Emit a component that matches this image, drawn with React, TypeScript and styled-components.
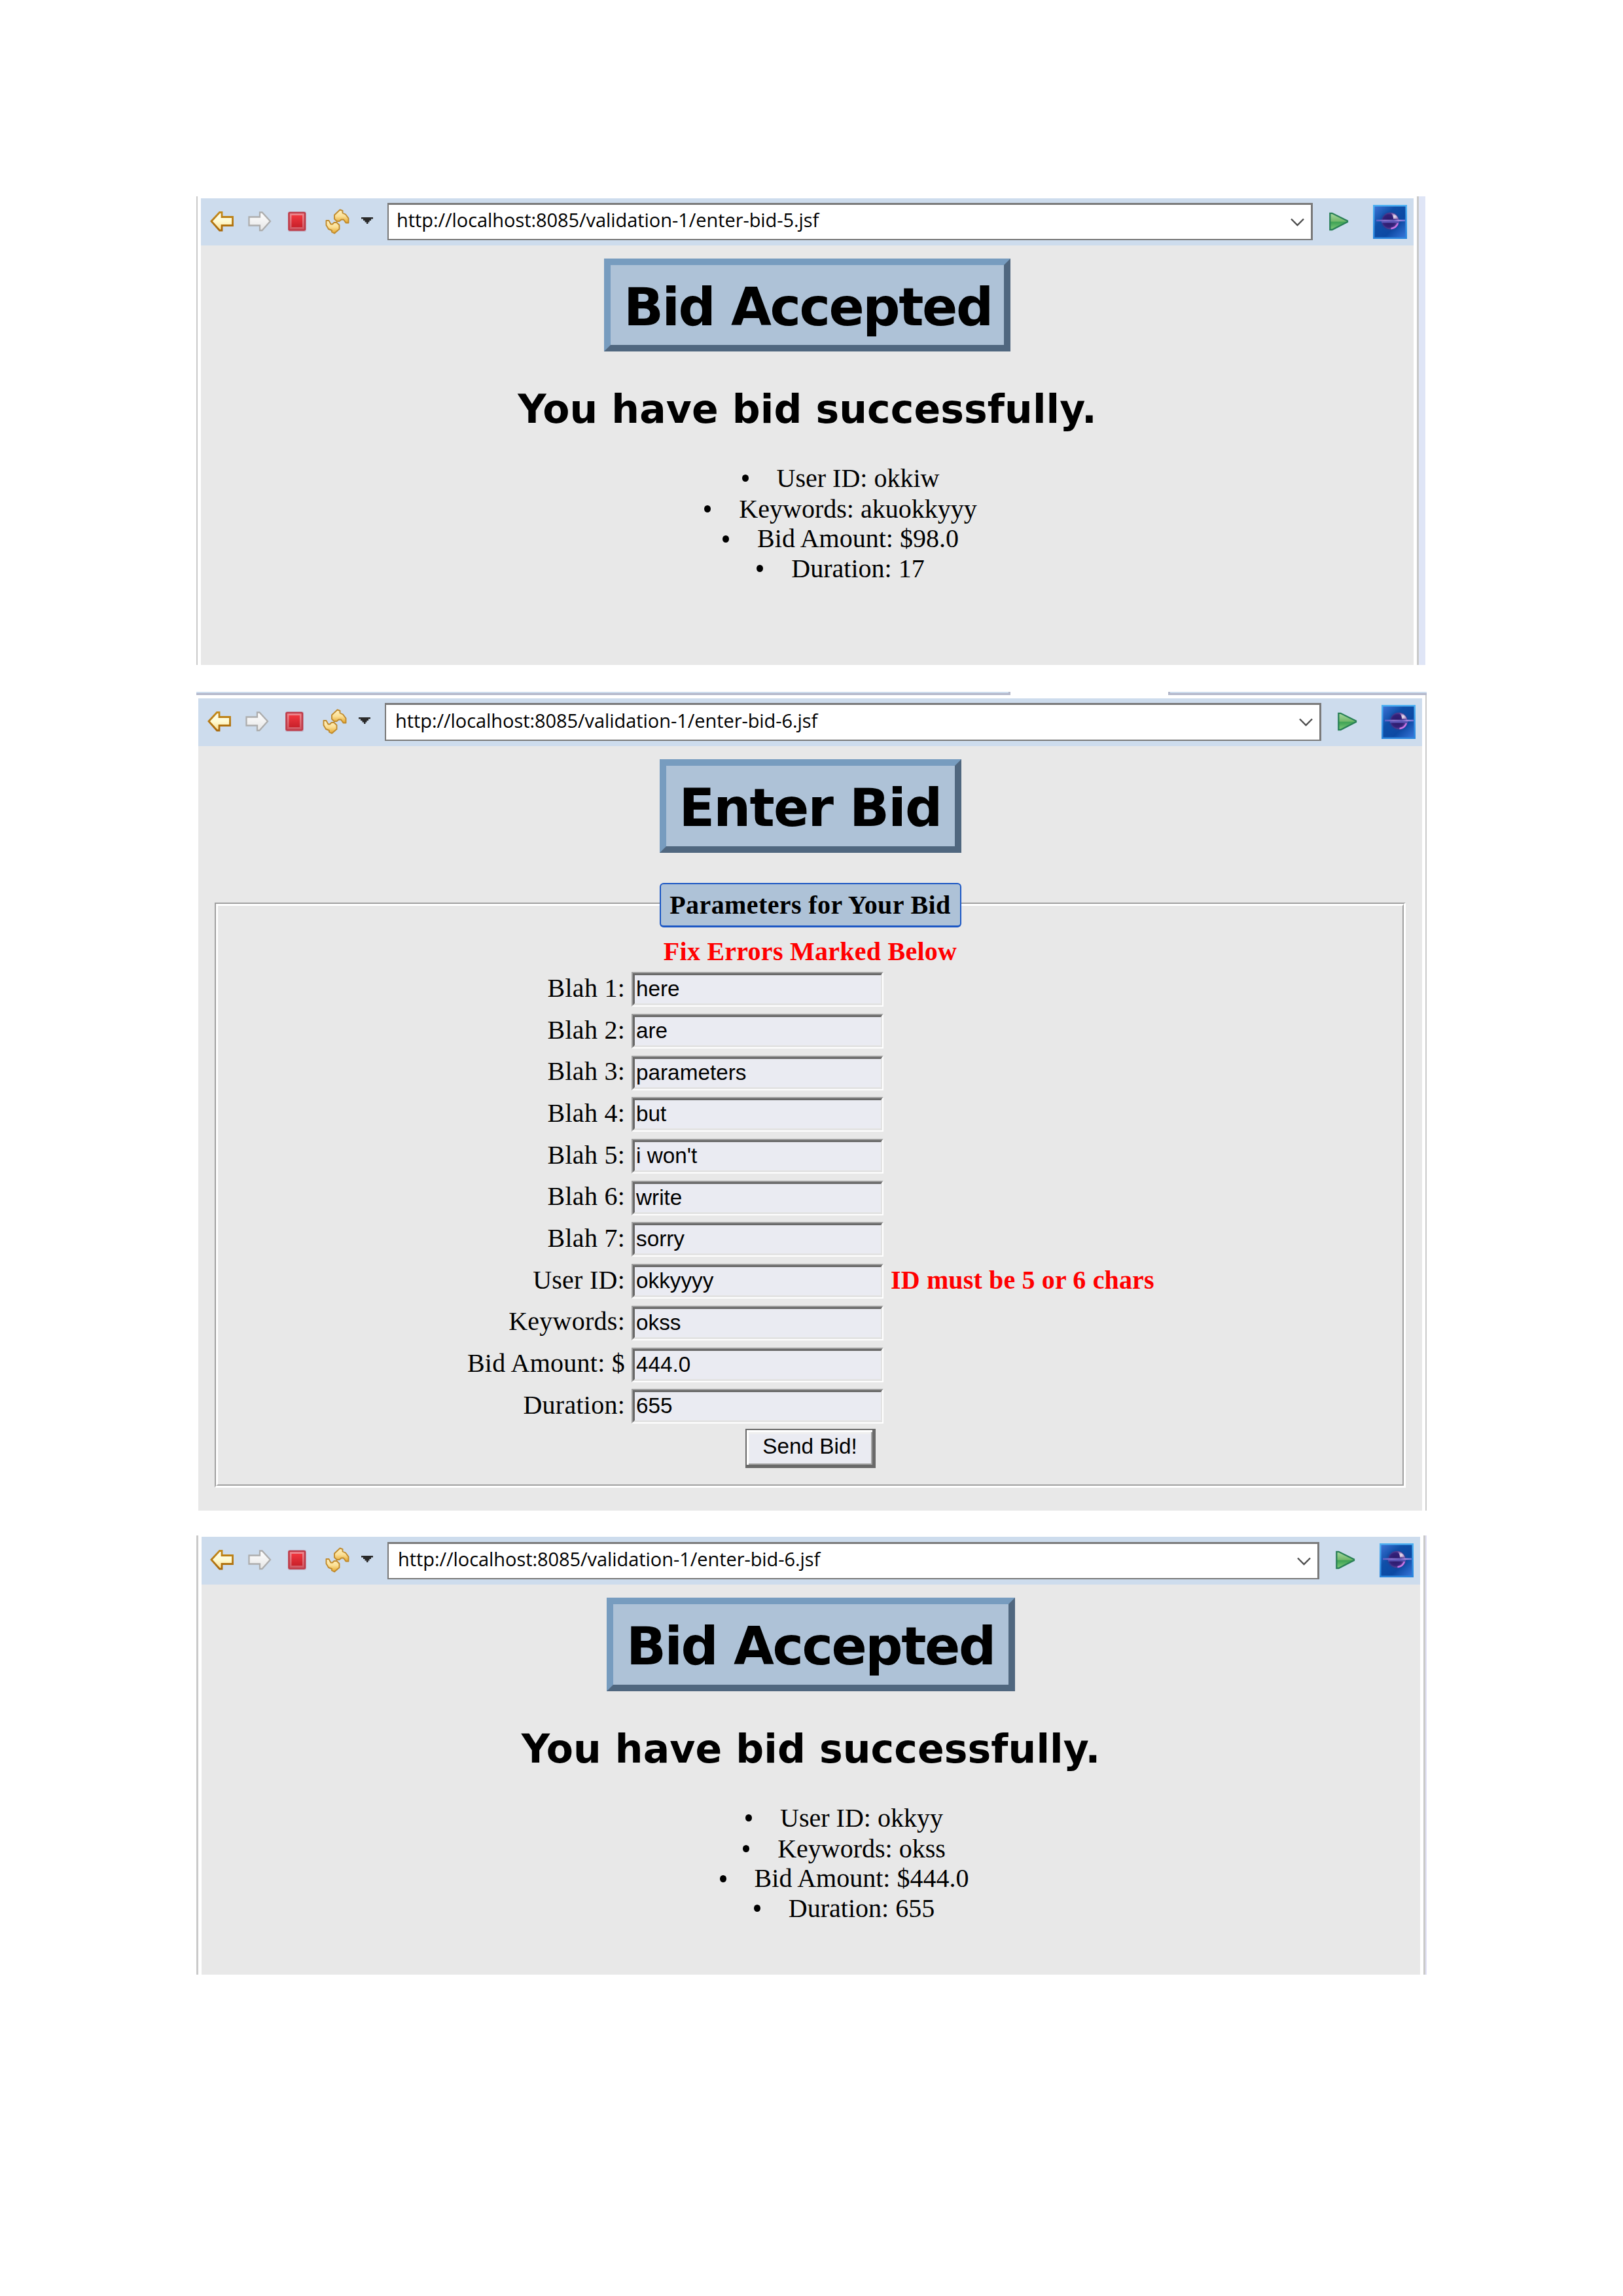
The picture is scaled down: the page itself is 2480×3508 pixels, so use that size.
import React from "react";
import styled, { createGlobalStyle } from "styled-components";

const GlobalStyle = createGlobalStyle`
  *, *::before, *::after { box-sizing: border-box; }
  html, body { margin: 0; padding: 0; background: #ffffff; }
`;

const SERIF = `"Liberation Serif", "Times New Roman", serif`;
const SANS = `"Liberation Sans", Arial, sans-serif`;
const HEADING = `"DejaVu Sans", Verdana, sans-serif`;
const CHROME = `"Open Sans", "Noto Sans", sans-serif`;

/* ---------- page and window frames ---------- */

const Page = styled.main`
  width: 2480px;
  height: 3508px;
  padding: 300px 0 0 300px;
  background: #ffffff;
  color: #000000;
  font-family: ${SERIF};
  font-size: 40px;
  overflow: hidden;
`;

const Frame = styled.section<{ $width: number; $height: number; $gap: number }>`
  display: flex;
  width: ${(p) => p.$width}px;
  height: ${(p) => p.$height}px;
  margin-bottom: ${(p) => p.$gap}px;
`;

const Edge = styled.div<{ $width: number; $color?: string }>`
  flex: none;
  width: ${(p) => p.$width}px;
  background: ${(p) => p.$color ?? "#cacaca"};
`;

const View = styled.div<{ $top: number; $left: number; $right: number }>`
  flex: 1;
  min-width: 0;
  display: flex;
  flex-direction: column;
  margin: ${(p) => p.$top}px ${(p) => p.$right}px 0 ${(p) => p.$left}px;
  background: #e8e8e8;
`;

const TabStrip = styled.div`
  display: flex;
  justify-content: space-between;
  width: 1880px;
  height: 5px;
`;

const TabEdge = styled.div<{ $width: number; $side: "left" | "right" }>`
  width: ${(p) => p.$width}px;
  background: #cddced;
  border-bottom: 3px solid #b3b8cb;
  border-${(p) => p.$side}: 3px solid #b3b8cb;
`;

/* ---------- browser toolbar ---------- */

const Bar = styled.div<{ $height: number; $left: number; $right: number }>`
  flex: none;
  display: flex;
  align-items: flex-start;
  height: ${(p) => p.$height}px;
  padding: 0 ${(p) => p.$right}px 0 ${(p) => p.$left}px;
  background: #cddced;
`;

const Icon = styled.svg<{ $top: number; $after?: number }>`
  flex: none;
  display: block;
  margin-top: ${(p) => p.$top}px;
  margin-right: ${(p) => p.$after ?? 0}px;
`;

const Address = styled.div<{ $top: number; $height: number; $inset: number }>`
  flex: 1;
  display: flex;
  align-items: center;
  justify-content: space-between;
  height: ${(p) => p.$height}px;
  margin: ${(p) => p.$top}px 25px 0 0;
  padding: 0 10px 0 ${(p) => p.$inset}px;
  border: solid #7a7a7a;
  border-width: 3px 3px 2px 2px;
  background: #ffffff;
`;

const Url = styled.span`
  padding-bottom: 6px;
  font-family: ${CHROME};
  font-size: 29px;
  line-height: 40px;
  letter-spacing: -0.070px;
  white-space: nowrap;
`;

type ToolbarProps = {
  url: string;
  height: number;
  left: number;
  right: number;
  addressTop: number;
  addressHeight: number;
  inset: number;
  id: string;
};

function Toolbar({ url, height, left, right, addressTop, addressHeight, inset, id }: ToolbarProps) {
  return (
    <Bar $height={height} $left={left} $right={right}>
      <Icon $top={19} $after={22} width="36" height="32" viewBox="0 0 36 32">
        <defs>
          <linearGradient id={`${id}-gold`} x1="0" y1="0" x2="0" y2="1">
            <stop offset="0" stopColor="#fffdf0" />
            <stop offset=".5" stopColor="#fffbd2" />
            <stop offset="1" stopColor="#fbdc8a" />
          </linearGradient>
          <linearGradient id={`${id}-rim`} x1="0" y1="0" x2="0" y2="1">
            <stop offset="0" stopColor="#c48a1a" />
            <stop offset="1" stopColor="#a9690a" />
          </linearGradient>
        </defs>
        <path d="M2 16 L14.5 2.5 H18 V9.5 H34.5 V22.5 H18 V30 H14.5 Z" fill={`url(#${id}-gold)`} stroke={`url(#${id}-rim)`} strokeWidth="2.8" />
      </Icon>
      <Icon $top={19} $after={25} width="36" height="32" viewBox="0 0 36 32">
        <defs>
          <linearGradient id={`${id}-grey`} x1="0" y1="0" x2="0" y2="1">
            <stop offset="0" stopColor="#ffffff" />
            <stop offset="1" stopColor="#e6e6e6" />
          </linearGradient>
        </defs>
        <path d="M34 16 L21.500 2.500 H18 V9.500 H1.500 V22.500 H18 V30 H21.500 Z" fill={`url(#${id}-grey)`} stroke="#adadad" strokeWidth="2.3" />
      </Icon>
      <Icon $top={20} $after={29} width="28" height="32" viewBox="0 0 28 32">
        <defs>
          <linearGradient id={`${id}-stop`} x1="0" y1="0" x2="0" y2="1">
            <stop offset="0" stopColor="#f0363e" />
            <stop offset="1" stopColor="#c9202a" />
          </linearGradient>
          <linearGradient id={`${id}-bevel`} x1="0" y1="0" x2="0" y2="1">
            <stop offset="0" stopColor="#f08c92" />
            <stop offset="1" stopColor="#cf5560" />
          </linearGradient>
        </defs>
        <rect x="0" y="0" width="28" height="31" rx="2" fill="#b9a9bd" opacity=".6" />
        <rect x="1.500" y="2" width="24.500" height="26.500" rx="1.500" fill={`url(#${id}-bevel)`} stroke="#bf3a47" strokeWidth="2.600" />
        <rect x="5.500" y="6" width="16.500" height="18" fill={`url(#${id}-stop)`} />
      </Icon>
      <Icon $top={15} $after={18} width="37" height="40" viewBox="0 0 37 40">
        <defs>
          <linearGradient id={`${id}-amber`} x1="0" y1="0" x2="0" y2="1">
            <stop offset="0" stopColor="#fff2c4" />
            <stop offset=".5" stopColor="#fbdf94" />
            <stop offset="1" stopColor="#e3a42a" />
          </linearGradient>
        </defs>
        <g fill={`url(#${id}-amber)`} stroke="#c08a2c" strokeWidth="1.900" strokeLinejoin="round">
          <path d="M22.500 2.500 L14 10.500 V16.500 L17.500 20 H21.500 L24.500 17.500 H28 L31.500 22.500 H35.500 V15.500 L31 9.500 L26.500 7.500 V4 Z" />
          <path d="M14 38.500 L21.500 32 V26 L17.500 22 H13.500 L11 24.500 H8.500 L5.500 19 H1.500 V26 L5 32 L10 34 V36.500 Z" />
        </g>
      </Icon>
      <Icon $top={29} $after={22} width="18" height="10" viewBox="0 0 18 10">
        <path d="M0 0 H18 V2.500 H15 V5 H12.500 V7.500 H10.500 V10 H8 V7.500 H5.500 V5 H3 V2.500 H0 Z" fill="#292929" />
      </Icon>
      <Address $top={addressTop} $height={addressHeight} $inset={inset}>
        <Url>{url}</Url>
        <Icon $top={1} width="21" height="14" viewBox="0 0 21 14">
          <path d="M1 1.500 L10.500 11 L20 1.500" fill="none" stroke="#4c4c4c" strokeWidth="2.300" />
        </Icon>
      </Address>
      <Icon $top={21} $after={37} width="30" height="30" viewBox="0 0 30 30">
        <defs>
          <linearGradient id={`${id}-go`} x1="0" y1="0" x2="0" y2="1">
            <stop offset="0" stopColor="#a9d8a0" />
            <stop offset=".48" stopColor="#74b96c" />
            <stop offset=".55" stopColor="#3fa356" />
            <stop offset="1" stopColor="#7fca78" />
          </linearGradient>
        </defs>
        <path d="M1.300 1.800 H4.500 L28 13.500 V15 L4.500 27 H1.300 Z" fill={`url(#${id}-go)`} stroke="#2a8057" strokeWidth="2.300" />
      </Icon>
      <Icon $top={10} width="52" height="52" viewBox="0 0 52 52">
        <defs>
          <linearGradient id={`${id}-sky`} x1="0" y1="0" x2="1" y2="1">
            <stop offset="0" stopColor="#3f74d6" />
            <stop offset=".35" stopColor="#0f4fa8" />
            <stop offset=".65" stopColor="#0c49a3" />
            <stop offset="1" stopColor="#3a78dc" />
          </linearGradient>
          <radialGradient id={`${id}-planet`} cx=".42" cy=".5" r=".6">
            <stop offset="0" stopColor="#2a1a66" />
            <stop offset=".6" stopColor="#33217a" />
            <stop offset=".85" stopColor="#5f4699" />
            <stop offset="1" stopColor="#8a66b8" />
          </radialGradient>
          <radialGradient id={`${id}-halo`} cx=".5" cy=".5" r=".5">
            <stop offset=".7" stopColor="#283a8e" stopOpacity=".75" />
            <stop offset="1" stopColor="#0f4fa8" stopOpacity="0" />
          </radialGradient>
          <radialGradient id={`${id}-shine`} cx=".5" cy=".6" r=".6">
            <stop offset="0" stopColor="#ece8f0" />
            <stop offset=".5" stopColor="#c0a9d2" />
            <stop offset="1" stopColor="#8a62b0" />
          </radialGradient>
          <linearGradient id={`${id}-frame`} x1="0" y1="0" x2="0" y2="1">
            <stop offset="0" stopColor="#4db0f2" />
            <stop offset="1" stopColor="#2a86de" />
          </linearGradient>
          <linearGradient id={`${id}-ring`} x1="0" y1="0" x2="1" y2="0">
            <stop offset="0" stopColor="#5b5fc4" />
            <stop offset=".3" stopColor="#8a74cc" />
            <stop offset=".6" stopColor="#6a62c0" />
            <stop offset=".78" stopColor="#a88be0" />
            <stop offset="1" stopColor="#6f74d8" />
          </linearGradient>
        </defs>
        <rect x="1.250" y="1.250" width="49.500" height="49.500" fill={`url(#${id}-sky)`} stroke={`url(#${id}-frame)`} strokeWidth="2.500" />
        <ellipse cx="26.500" cy="25" rx="18" ry="16.500" fill={`url(#${id}-halo)`} />
        <ellipse cx="26.500" cy="24.500" rx="12.800" ry="12.800" fill={`url(#${id}-planet)`} />
        <path d="M27.500 12.500 C33.500 13.500 37.500 17 38.500 21.500 H31 C31 18 30 15 27.500 12.500 Z" fill={`url(#${id}-shine)`} />
        <path d="M38 28 C36.500 32.500 33 35.500 27.500 36.300" fill="none" stroke="#c873e4" strokeWidth="2.400" />
        <rect x="5" y="22.700" width="44" height="2.500" fill={`url(#${id}-ring)`} />
        <rect x="13" y="25" width="27" height="2.500" fill="#5a53b4" />
      </Icon>
    </Bar>
  );
}

/* ---------- page contents ---------- */

const Title = styled.h1<{ $width: number; $height: number; $spacing: number; $indent: number }>`
  flex: none;
  align-self: center;
  width: ${(p) => p.$width}px;
  height: ${(p) => p.$height}px;
  margin: 20px 0 0;
  padding: 18px 0 0 ${(p) => p.$indent}px;
  border: 10px solid;
  border-color: #779cbf #50677f #50677f #779cbf;
  background: #aec2d7;
  font-family: ${HEADING};
  font-size: 80px;
  font-weight: bold;
  line-height: 93px;
  letter-spacing: ${(p) => p.$spacing}px;
  white-space: nowrap;
`;

const Message = styled.h2`
  flex: none;
  align-self: center;
  margin: 53px 0 48px;
  font-family: ${HEADING};
  font-size: 60px;
  font-weight: bold;
  line-height: 70px;
  letter-spacing: 0.100px;
  white-space: nowrap;
`;

const Facts = styled.ul`
  display: flex;
  flex-direction: column;
  margin: 0;
  padding: 0 0 0 102px;
  list-style: none;
`;

const Fact = styled.li`
  display: flex;
  align-items: center;
  justify-content: center;
  height: 45.700px;
  line-height: 45.700px;
  white-space: nowrap;

  &:first-child {
    margin-bottom: 1px;
  }

  &::before {
    content: "";
    width: 10px;
    height: 11px;
    margin: 0 43px 0 0;
    border-radius: 50%;
    background: #000000;
  }
`;

function Accepted({ facts, titleHeight, titleWidth }: { facts: string[]; titleHeight: number; titleWidth: number }) {
  return (
    <>
      <Title $width={titleWidth} $height={titleHeight} $spacing={-2.4} $indent={20}>
        Bid Accepted
      </Title>
      <Message>You have bid successfully.</Message>
      <Facts>
        {facts.map((f) => (
          <Fact key={f}>{f}</Fact>
        ))}
      </Facts>
    </>
  );
}

const GrooveOuter = styled.div`
  flex: none;
  height: 894px;
  margin: 76px 25px 0;
  border: solid;
  border-width: 2px 3px 3px 2px;
  border-color: #a0a0a0 #ffffff #ffffff #a0a0a0;
`;

const GrooveInner = styled.div`
  display: flex;
  flex-direction: column;
  align-items: center;
  height: 100%;
  border: solid;
  border-width: 3px 2px 2px 3px;
  border-color: #ffffff #a0a0a0 #a0a0a0 #ffffff;
`;

const Legend = styled.div`
  flex: none;
  width: 461px;
  height: 68px;
  margin-top: -35px;
  border: solid #1c57c4;
  border-width: 2px 2px 3px;
  border-radius: 6px;
  background: #aec2d7;
  font-weight: bold;
  line-height: 63px;
  letter-spacing: 0.400px;
  text-align: center;
  white-space: nowrap;
`;

const Warning = styled.div`
  margin: 14px 0 4px;
  color: #ff0000;
  font-weight: bold;
  line-height: 45px;
  letter-spacing: 0.250px;
`;

const Row = styled.div`
  flex: none;
  align-self: stretch;
  display: grid;
  grid-template-columns: 622px 385px 1fr;
  column-gap: 10px;
  align-items: center;
  height: 63.700px;
  white-space: nowrap;
`;

const Label = styled.label`
  padding-bottom: 5px;
  text-align: right;
  line-height: 45px;
  letter-spacing: 0.250px;
`;

const Field = styled.div`
  height: 53px;
  border: solid;
  border-width: 2px;
  border-color: #a0a0a0 #ffffff #ffffff #a0a0a0;
`;

const FieldInner = styled.div`
  height: 49px;
  padding: 0 0 0 2px;
  border: solid;
  border-width: 3px 2px 3px 3px;
  border-color: #696969 #e3e3e3 #e3e3e3 #696969;
  background: #eaebf2;
  font-family: ${SANS};
  font-size: 33.300px;
  line-height: 41px;
`;

const RowError = styled.span`
  padding: 0 0 5px 1px;
  color: #ff0000;
  font-weight: bold;
  line-height: 45px;
  letter-spacing: 0.150px;
`;

const Button = styled.button`
  flex: none;
  width: 199px;
  height: 60px;
  margin: 2px 0 0;
  padding: 0 0 2px 2px;
  border: solid #696969;
  border-width: 2px 5px 5px 2px;
  background: #eaebf2;
  box-shadow: inset 3px 3px 0 #ffffff, inset -2px -2px 0 #a0a0a0, inset 4px 6px 0 #f0f0f0;
  color: #000000;
  font-family: ${SANS};
  font-size: 33.300px;
  line-height: 50px;
  white-space: nowrap;
`;

const fields: { label: string; value: string; error?: string }[] = [
  { label: "Blah 1:", value: "here" },
  { label: "Blah 2:", value: "are" },
  { label: "Blah 3:", value: "parameters" },
  { label: "Blah 4:", value: "but" },
  { label: "Blah 5:", value: "i won't" },
  { label: "Blah 6:", value: "write" },
  { label: "Blah 7:", value: "sorry" },
  { label: "User ID:", value: "okkyyyy", error: "ID must be 5 or 6 chars" },
  { label: "Keywords:", value: "okss" },
  { label: "Bid Amount: $", value: "444.0" },
  { label: "Duration:", value: "655" },
];

export default function App() {
  return (
    <>
      <GlobalStyle />
      <Page>
        <Frame $width={1878} $height={716} $gap={41}>
          <Edge $width={2} />
          <View $top={3} $left={5} $right={5}>
            <Toolbar id="a" url="http://localhost:8085/validation-1/enter-bid-5.jsf" height={72} left={14} right={10} addressTop={7} addressHeight={57} inset={12} />
            <Accepted titleWidth={621} titleHeight={142} facts={["User ID: okkiw", "Keywords: akuokkyyy", "Bid Amount: $98.0", "Duration: 17"]} />
          </View>
          <Edge $width={3} />
          <Edge $width={10} $color="#dfe5f6" />
        </Frame>

        <TabStrip>
          <TabEdge $width={1244} $side="right" />
          <TabEdge $width={395} $side="left" />
        </TabStrip>
        <Frame $width={1880} $height={1246} $gap={38}>
          <View $top={5} $left={3} $right={5}>
            <Toolbar id="b" url="http://localhost:8085/validation-1/enter-bid-6.jsf" height={73} left={14} right={10} addressTop={7} addressHeight={58} inset={14} />
            <Title $width={461} $height={143} $spacing={-1.8} $indent={20}>
              Enter Bid
            </Title>
            <GrooveOuter>
              <GrooveInner>
                <Legend>Parameters for Your Bid</Legend>
                <Warning>Fix Errors Marked Below</Warning>
                {fields.map((f) => (
                  <Row key={f.label}>
                    <Label>{f.label}</Label>
                    <Field>
                      <FieldInner>{f.value}</FieldInner>
                    </Field>
                    {f.error && <RowError>{f.error}</RowError>}
                  </Row>
                ))}
                <Button>Send Bid!</Button>
              </GrooveInner>
            </GrooveOuter>
          </View>
          <Edge $width={2} />
        </Frame>

        <Frame $width={1880} $height={671} $gap={0}>
          <Edge $width={3} />
          <View $top={2} $left={5} $right={5}>
            <Toolbar id="c" url="http://localhost:8085/validation-1/enter-bid-6.jsf" height={73} left={13} right={10} addressTop={8} addressHeight={57} inset={14} />
            <Accepted titleWidth={624} titleHeight={143} facts={["User ID: okkyy", "Keywords: okss", "Bid Amount: $444.0", "Duration: 655"]} />
          </View>
          <Edge $width={3} />
          <Edge $width={2} $color="#dfe0f4" />
        </Frame>
      </Page>
    </>
  );
}
